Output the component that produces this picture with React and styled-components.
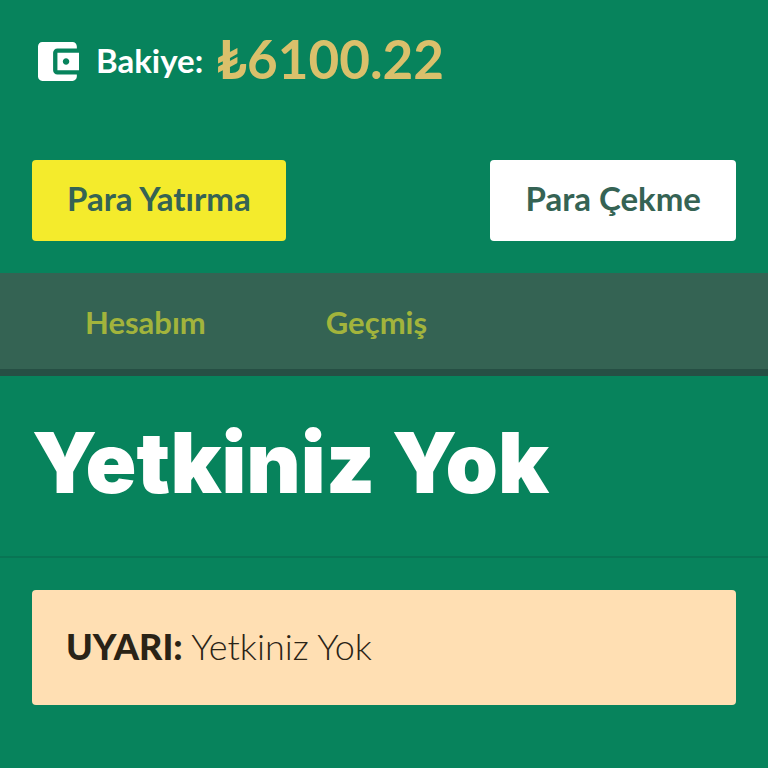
import React from "react";
import styled, { createGlobalStyle } from "styled-components";

const GlobalStyle = createGlobalStyle`
  *, *::before, *::after { box-sizing: border-box; }
  body { margin: 0; background: #07835c; color: #fff; font-family: Lato, "Noto Sans", sans-serif; }
  h1, p { margin: 0; }
`;
const Page = styled.div`min-height: 100vh; background: #07835c;`;
const Balance = styled.header`
  display: flex; align-items: center; height: 120px; padding: 2px 38px 0;
`;
const WalletIcon = styled.svg`width: 41px; height: 39px; flex: none;`;
const BalanceLabel = styled.span`
  margin-left: 17px; padding-bottom: 2px; font-size: 33px; line-height: 40px; font-weight: 700;
`;
const Amount = styled.strong`
  margin-left: 13px; padding-bottom: 4px; font-size: 53px; line-height: 60px; font-weight: 700; color: #dac06b;
`;
const Actions = styled.div`
  display: flex; justify-content: space-between; padding: 40px 32px 32px;
`;
const ActionButton = styled.button`
  padding: 18px 35px 23px; border: 0; border-radius: 4px; cursor: pointer;
  background: ${(p) => (p.$primary ? "#f4eb2c" : "#fff")};
  color: #356354; font: 700 33px/40px Lato, "Noto Sans", sans-serif;
  font-variant-ligatures: none;
`;
const Tabs = styled.nav`
  display: flex; align-items: center; gap: 120px; height: 103px; padding: 2px 85px 0;
  background: #346353; border-bottom: 7px solid #264f44;
`;
const Tab = styled.a`
  color: #a2b43c; font-size: 31px; line-height: 40px; font-weight: 700; text-decoration: none;
`;
const TitleBar = styled.div`padding: 36px 32px 42px; border-bottom: 2px solid #087554;`;
const Title = styled.h1`
  font-family: Inter, "Noto Sans", sans-serif; font-size: 84px; line-height: 102px; font-weight: 900;
`;
const Warning = styled.p`
  margin: 32px; padding: 35px 34px 37px; border-radius: 4px; background: #ffdfb3; color: #2a2316;
  font-size: 36px; line-height: 43px; font-weight: 300;
  strong { font-weight: 900; }
`;

export default function App() {
  return (
    <Page>
      <GlobalStyle />
      <Balance>
        <WalletIcon viewBox="3 3 19 18" aria-hidden="true">
          <path fill="#fff" d="M21 18v1c0 1.1-.9 2-2 2H5c-1.11 0-2-.9-2-2V5c0-1.1.89-2 2-2h14c1.1 0 2 .9 2 2v1h-9c-1.11 0-2 .9-2 2v8c0 1.1.89 2 2 2h9zm-9-2h10V8H12v8zm4-2.5c-.83 0-1.5-.67-1.5-1.5s.67-1.5 1.5-1.5 1.5.67 1.5 1.5-.67 1.5-1.5 1.5z" />
        </WalletIcon>
        <BalanceLabel>Bakiye:</BalanceLabel>
        <Amount>₺6100.22</Amount>
      </Balance>
      <Actions>
        <ActionButton $primary>Para Yatırma</ActionButton>
        <ActionButton>Para Çekme</ActionButton>
      </Actions>
      <Tabs>
        <Tab href="#hesabim">Hesabım</Tab>
        <Tab href="#gecmis">Geçmiş</Tab>
      </Tabs>
      <TitleBar><Title>Yetkiniz Yok</Title></TitleBar>
      <Warning role="alert"><strong>UYARI:</strong> Yetkiniz Yok</Warning>
    </Page>
  );
}
